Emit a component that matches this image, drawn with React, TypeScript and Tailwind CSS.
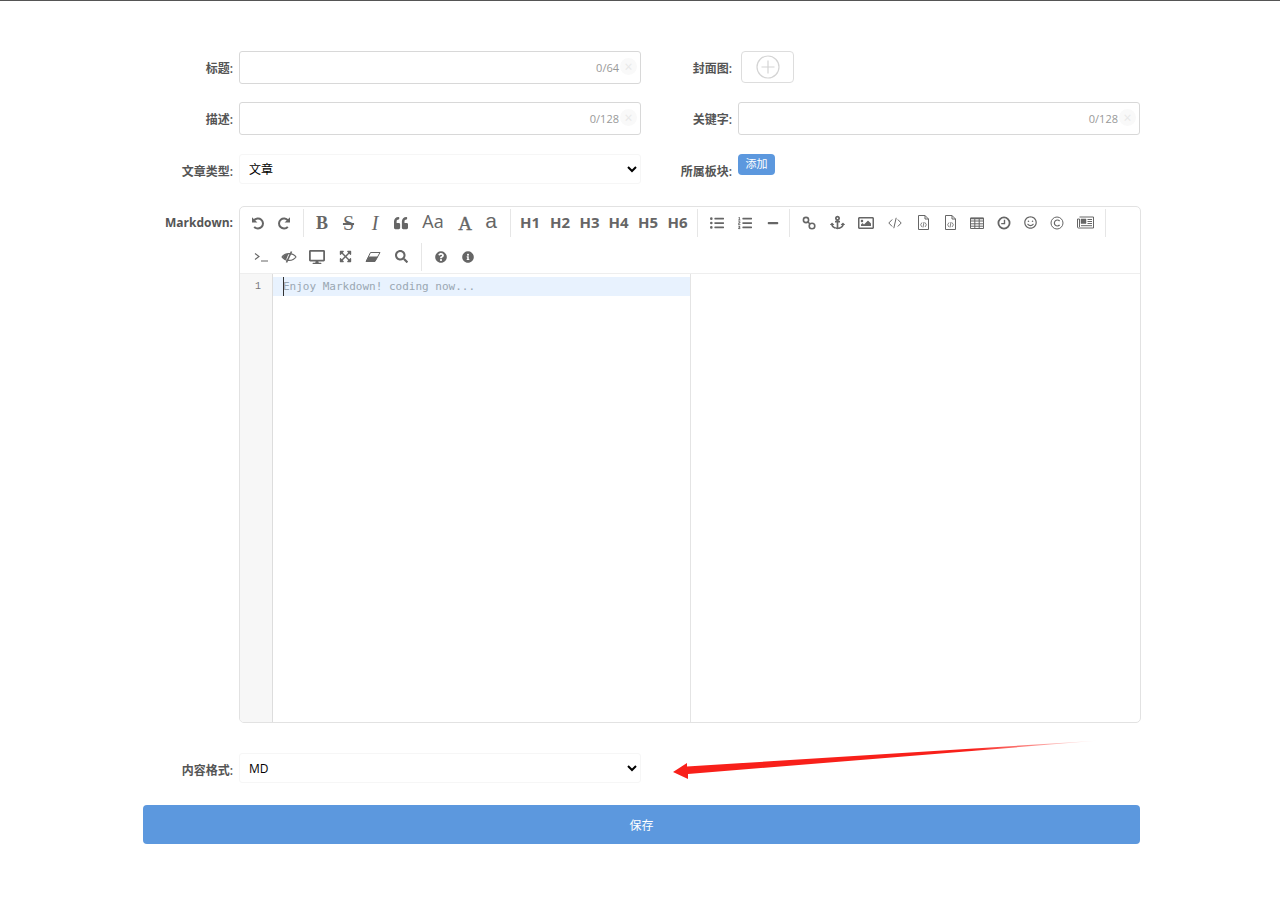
import type { ReactNode } from 'react'
import {
  FaQuoteLeft, FaListUl, FaListOl, FaMinus, FaAnchor, FaRegImage,
  FaRegSmile, FaDesktop, FaExpandArrowsAlt, FaSearch, FaQuestionCircle, FaInfoCircle,
} from 'react-icons/fa'

const sans = "font-['Open_Sans','Noto_Sans_CJK_SC',sans-serif]"

function Label({ children, className }: { children: ReactNode; className: string }) {
  return (
    <label className={`shrink-0 text-right text-[12px] text-[#555] ${className}`}>
      {children}
    </label>
  )
}

function CountInput({ count, className }: { count: string; className: string }) {
  return (
    <div className={`relative flex h-[33px] items-center justify-end rounded-[3px] border border-[#d8d8d8] pr-[21px] ${className}`}>
      <span className="pt-[2px] text-[11px] text-[#999]">{count}</span>
      {/* faint clear button */}
      <span className="absolute right-[3px] top-[6px] flex h-[17px] w-[17px] items-center justify-center rounded-full bg-[#f9f9f9] text-[14px] leading-none text-[#e8e8e8]">
        ×
      </span>
    </div>
  )
}

function PickType({ value, className }: { value: string; className: string }) {
  return (
    <select
      defaultValue={value}
      className={`w-[402px] rounded-[3px] border border-[#f6f6f6] bg-white pl-[5px] text-[12px] text-black outline-none ${className}`}
    >
      <option>{value}</option>
    </select>
  )
}

function Tool({ w, children }: { w: string; children: ReactNode }) {
  return <li className={`flex h-[32px] shrink-0 items-center justify-center text-[#666] ${w}`}>{children}</li>
}

function Sep({ className }: { className: string }) {
  return <li className={`h-[28px] w-px shrink-0 bg-[#e6e6e6] ${className}`} />
}

function Heading({ w, children }: { w: string; children: ReactNode }) {
  return (
    <Tool w={w}>
      <span className="text-[15px] font-bold leading-none text-[#666]">{children}</span>
    </Tool>
  )
}

function SerifGlyph({ w, className, children }: { w: string; className: string; children: ReactNode }) {
  return (
    <Tool w={w}>
      <span className={`font-['Liberation_Serif',serif] leading-none text-[#666] ${className}`}>{children}</span>
    </Tool>
  )
}

// Font Awesome 4 shapes that the packaged FA5 set draws differently
function UndoIcon({ className }: { className?: string }) {
  return (
    <svg className={className} width="14" height="14" viewBox="0 0 14 14" fill="none" stroke="currentColor" strokeWidth="2">
      <path d="M3 4.5A5 5 0 1 1 3.2 10.8" />
      <path d="M1 1.2V6.6H6.4Z" fill="currentColor" stroke="none" />
    </svg>
  )
}

function FileCodeIcon() {
  return (
    <svg width="13" height="15" viewBox="0 0 13 15" fill="none" stroke="currentColor" strokeWidth="1">
      <path d="M1.5 .5H8L11.5 4V14.5H1.5Z M8 .5V4H11.5" />
      <path d="M5 7.5 3.6 9.8 5 12M8 7.5 9.4 9.8 8 12M7 7 6 12.5" strokeWidth=".8" />
    </svg>
  )
}

function Toolbar() {
  return (
    <div className="h-[67px] border-b border-[#eeeeee]">
      <ul className="flex h-[31px] items-center pl-[5px]">
        <Tool w="w-[26px]"><UndoIcon /></Tool>
        <Tool w="w-[26px]"><UndoIcon className="-scale-x-100" /></Tool>
        <Sep className="ml-[6px] mr-[5px]" />
        <SerifGlyph w="w-[26px]" className="text-[18px] font-bold">B</SerifGlyph>
        <SerifGlyph w="w-[27px]" className="text-[20px] line-through">S</SerifGlyph>
        <SerifGlyph w="w-[26px]" className="text-[20px] italic">I</SerifGlyph>
        <Tool w="w-[26px]"><FaQuoteLeft size={14} /></Tool>
        <Tool w="w-[38px]"><span className="-mt-[4px] text-[18px] leading-none">Aa</span></Tool>
        <SerifGlyph w="w-[26px]" className="mt-[2px] text-[19px] [-webkit-text-stroke:0.4px_#666]">A</SerifGlyph>
        <Tool w="w-[26px]"><span className="-mt-[4px] font-['Liberation_Sans',sans-serif] text-[21px] leading-none">a</span></Tool>
        <Sep className="ml-[6px] mr-[4px]" />
        <Heading w="w-[30px]">H1</Heading>
        <Heading w="w-[30px]">H2</Heading>
        <Heading w="w-[29px]">H3</Heading>
        <Heading w="w-[29px]">H4</Heading>
        <Heading w="w-[30px]">H5</Heading>
        <Heading w="w-[29px]">H6</Heading>
        <Sep className="ml-[5px] mr-[5px]" />
        <Tool w="w-[28px]"><FaListUl size={14} /></Tool>
        <Tool w="w-[28px]"><FaListOl size={14} /></Tool>
        <Tool w="w-[27px]"><FaMinus size={12} /></Tool>
        <Sep className="ml-[3px] mr-[5px]" />
        <Tool w="w-[28px]">
          <svg width="14" height="14" viewBox="0 0 14 14" fill="none" stroke="currentColor" strokeWidth="1.6">
            <circle cx="4" cy="4" r="2.6" />
            <circle cx="10" cy="10" r="2.8" />
            <path d="M5.8 5.8 8 8" />
          </svg>
        </Tool>
        <Tool w="w-[29px]"><FaAnchor size={15} /></Tool>
        <Tool w="w-[28px]"><FaRegImage size={16} /></Tool>
        <Tool w="w-[30px]">
          <svg width="14" height="12" viewBox="0 0 14 12" fill="none" stroke="currentColor" strokeWidth="1">
            <path d="M4.2 2.5 .8 6 4.2 9.5M9.8 2.5 13.2 6 9.8 9.5M8.2 .8 5.8 11.2" />
          </svg>
        </Tool>
        <Tool w="w-[26px]"><FileCodeIcon /></Tool>
        <Tool w="w-[28px]"><FileCodeIcon /></Tool>
        <Tool w="w-[26px]">
          <svg width="14" height="12" viewBox="0 0 14 12" fill="none" stroke="currentColor" strokeWidth="1">
            <path d="M.5 1H13.5V11.5H.5ZM.5 4H13.5M.5 6.8H13.5M.5 9.2H13.5M4.8 1V11.5M9.2 1V11.5" />
            <path d="M.5 1.5H13.5" strokeWidth="1.5" />
          </svg>
        </Tool>
        <Tool w="w-[28px]">
          <svg width="14" height="14" viewBox="0 0 14 14" fill="none" stroke="currentColor">
            <circle cx="7" cy="7" r="5.6" strokeWidth="1.8" />
            <path d="M7.5 3.8V7.6H4.2" strokeWidth="1.4" />
          </svg>
        </Tool>
        <Tool w="w-[24px]"><FaRegSmile size={13} /></Tool>
        <Tool w="w-[30px]">
          <svg width="14" height="14" viewBox="0 0 14 14" fill="none" stroke="currentColor" strokeWidth="1">
            <circle cx="7" cy="7" r="6" />
            <path d="M9.6 5A3 3 0 1 0 9.6 9" strokeWidth="1.2" />
          </svg>
        </Tool>
        <Tool w="w-[26px]">
          <svg width="17" height="13" viewBox="0 0 17 13" fill="none" stroke="currentColor" strokeWidth="1">
            <path d="M2.5 1H16.5V12H1.5A1 1 0 0 1 .5 11V3H2.5V11" />
            <path d="M4 3H9V7.5H4Z" fill="currentColor" strokeWidth=".5" />
            <path d="M10.5 3.5H15M10.5 5.5H15M10.5 7.5H15M4 9.7H15" />
          </svg>
        </Tool>
        <Sep className="ml-[7px]" />
      </ul>
      <ul className="mt-[3px] flex h-[31px] items-center pl-[7px]">
        <Tool w="w-[28px]">
          <svg width="14" height="10" viewBox="0 0 14 10" fill="none" stroke="currentColor" strokeWidth="1.1">
            <path d="M1 1.5 5 4.5 1 7.5M7 9H14" />
          </svg>
        </Tool>
        <Tool w="w-[28px]">
          <svg width="16" height="14" viewBox="0 0 16 14" fill="none" stroke="currentColor" strokeWidth="1.1">
            <path d="M1 7C4 2.5 12 2.5 15 7C12 11.5 4 11.5 1 7Z" />
            <path d="M1.6 7C3 5 5 4 7.5 3.8L5 10C3.6 9.4 2.5 8.4 1.6 7Z" fill="currentColor" stroke="none" />
            <path d="M10.5 1.5 5.5 12.5" strokeWidth="1.6" />
          </svg>
        </Tool>
        <Tool w="w-[28px]"><FaDesktop size={16} /></Tool>
        <Tool w="w-[28px]"><FaExpandArrowsAlt size={13} /></Tool>
        <Tool w="w-[28px]">
          <svg width="16" height="12" viewBox="0 0 16 12" fill="none" stroke="currentColor" strokeWidth="1">
            <path d="M5.5 1.5H15L10 10.5H1Z" />
            <path d="M1 10.5 3.6 5.5H13L10 10.5Z" fill="currentColor" stroke="none" />
          </svg>
        </Tool>
        <Tool w="w-[28px]"><FaSearch size={13} /></Tool>
        <Sep className="ml-[6px] mr-[5px]" />
        <Tool w="w-[28px]"><FaQuestionCircle size={12} /></Tool>
        <Tool w="w-[26px]"><FaInfoCircle size={12} /></Tool>
      </ul>
    </div>
  )
}

function Editor() {
  return (
    <div className="flex h-[517px] w-[902px] flex-col overflow-hidden rounded-[5px] border border-[#e2e2e2]">
      <Toolbar />
      <div className="flex flex-1">
        <div className="w-[33px] border-r border-[#dddddd] bg-[#f7f7f7] pt-[3px] pr-[11px] text-right font-['Liberation_Mono',monospace] text-[10px] leading-[19px] text-[#777]">
          1
        </div>
        <div className="w-[418px] border-r border-[#e4e4e4] pt-[3px]">
          <div className="relative h-[19px] bg-[#e8f2fe] pl-[10px] font-['DejaVu_Sans_Mono',monospace] text-[11px] leading-[19px] text-[#9aa7b2]">
            <span className="absolute left-[10px] top-0 h-[19px] w-px bg-[#333]" />
            Enjoy Markdown! coding now...
          </div>
        </div>
        <div className="flex-1" />
      </div>
    </div>
  )
}

export default function App() {
  return (
    <div className={`relative h-[901px] border-t border-[#555] bg-white ${sans}`}>
      <form className="ml-[143px] w-[998px] pt-[50px]">
        <div className="flex h-[33px] items-center">
          <Label className="w-[90px] pt-[2px] font-semibold">标题:</Label>
          <CountInput count="0/64" className="ml-[6px] w-[402px]" />
          <Label className="w-[91px] pt-[2px] font-semibold">封面图:</Label>
          <div className="ml-[9px] flex h-[32px] w-[53px] items-center justify-center self-start rounded-[4px] border border-[#dddddd]">
            <svg width="24" height="24" viewBox="0 0 24 24" fill="none" stroke="#d4d4d4" strokeWidth="1.2">
              <circle cx="12" cy="12" r="11" />
              <path d="M12 5.5V18.5M5.5 12H18.5" />
            </svg>
          </div>
        </div>

        <div className="mt-[18px] flex h-[33px] items-center">
          <Label className="w-[90px] pt-[2px] font-semibold">描述:</Label>
          <CountInput count="0/128" className="ml-[6px] w-[402px]" />
          <Label className="w-[91px] pt-[2px] font-semibold">关键字:</Label>
          <CountInput count="0/128" className="ml-[6px] w-[402px]" />
        </div>

        <div className="mt-[19px] flex h-[30px] items-start">
          <Label className="mt-[9px] w-[90px] font-semibold">文章类型:</Label>
          <PickType value="文章" className="ml-[6px] h-[30px]" />
          <Label className="mt-[9px] w-[91px] font-semibold">所属板块:</Label>
          <button type="button" className="ml-[6px] h-[21px] w-[37px] rounded-[4px] bg-[#5c98de] text-[11px] text-white">
            添加
          </button>
        </div>

        <div className="mt-[22px] flex items-start">
          <Label className="mt-[8px] w-[90px] font-bold">Markdown:</Label>
          <div className="ml-[6px]">
            <Editor />
          </div>
        </div>

        <div className="mt-[30px] flex h-[30px] items-start">
          <Label className="mt-[9px] w-[90px] font-semibold">内容格式:</Label>
          <PickType value="MD" className="ml-[6px] h-[30px]" />
        </div>

        <button type="button" className="mt-[22px] h-[39px] w-[997px] rounded-[4px] bg-[#5c98de] pt-[2px] text-[12px] text-white">
          保存
        </button>
      </form>

      {/* red annotation arrow drawn over the page */}
      <svg className="absolute left-[660px] top-[730px]" width="450" height="60" viewBox="0 0 450 60">
        <defs>
          <linearGradient id="tail" x1="0" x2="1" y1="0" y2="0">
            <stop offset="0.7" stopColor="#f8201a" />
            <stop offset="1" stopColor="#f8201a" stopOpacity="0" />
          </linearGradient>
        </defs>
        <path d="M13 41 27 32 27 35.5 440 9.5 28 43 28 48Z" fill="url(#tail)" />
      </svg>
    </div>
  )
}
